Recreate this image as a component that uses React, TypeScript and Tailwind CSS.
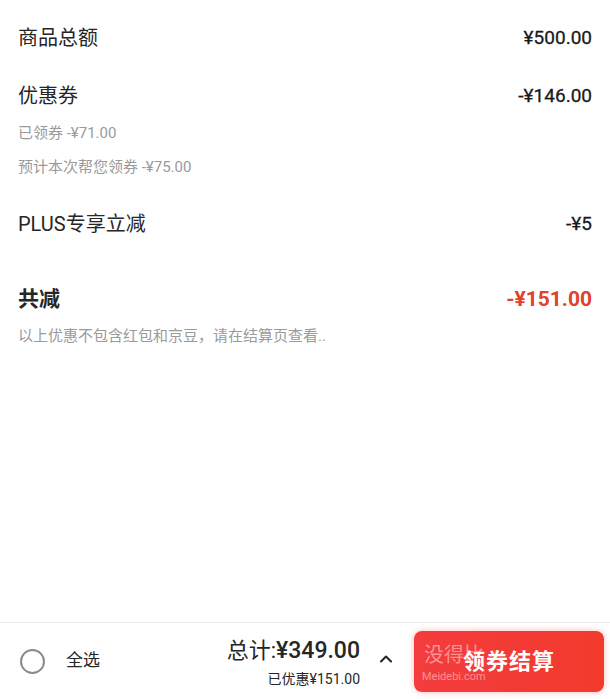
import { ChevronUp } from "lucide-react";

const font = { fontFamily: '"Roboto", "Noto Sans CJK SC", sans-serif' };

export default function App() {
  return (
    <div
      className="w-[610px] h-[699px] bg-white flex flex-col text-[#262626]"
      style={font}
    >
      {/* Detail list */}
      <div className="flex-1 px-[18px] pt-[24px]">
        <div className="flex justify-between items-center h-[28px] text-[20px]">
          <span>商品总额</span>
          <span className="text-[19px] text-[#1a1a1a] [-webkit-text-stroke:0.3px_#1a1a1a]">¥500.00</span>
        </div>

        <div className="mt-[30px] flex justify-between items-center h-[28px] text-[20px]">
          <span>优惠券</span>
          <span className="text-[19px] text-[#1a1a1a] [-webkit-text-stroke:0.3px_#1a1a1a]">-¥146.00</span>
        </div>
        <div className="mt-[13px] text-[15px] text-[#9a9a9a] leading-[20px]">已领券 -¥71.00</div>
        <div className="mt-[14px] text-[15px] text-[#9a9a9a] leading-[20px]">预计本次帮您领券 -¥75.00</div>

        <div className="mt-[33px] flex justify-between items-center h-[28px] text-[20px]">
          <span>PLUS专享立减</span>
          <span className="text-[19px] text-[#1a1a1a] [-webkit-text-stroke:0.3px_#1a1a1a]">-¥5</span>
        </div>

        <div className="mt-[47px] flex justify-between items-center h-[30px]">
          <span className="text-[21px] font-bold">共减</span>
          <span className="text-[21px] font-bold text-[#e2412b]">-¥151.00</span>
        </div>
        <div className="mt-[11px] text-[15px] text-[#9a9a9a] leading-[20px]">
          以上优惠不包含红包和京豆，请在结算页查看..
        </div>
      </div>

      {/* Bottom bar */}
      <div className="h-[77px] border-t border-[#ececec] flex items-center pl-[20px] pr-[6px]">
        <div className="w-[25px] h-[25px] rounded-full border-2 border-[#8a8a8a]" />
        <span className="ml-[21px] text-[17px]">全选</span>
        <div className="flex-1" />
        <div className="flex flex-col items-end mr-[16px] pt-[2px]">
          <div className="leading-[30px]">
            <span className="text-[22px]">总计:</span>
            <span className="text-[23px] font-medium">¥349.00</span>
          </div>
          <div className="text-[14px] leading-[18px] mt-[2px]">已优惠¥151.00</div>
        </div>
        <ChevronUp className="w-[20px] h-[20px] mr-[18px] -mt-[4px]" strokeWidth={2.5} />
        <div className="relative w-[190px] h-[61px] rounded-[8px] bg-gradient-to-r from-[#f43c3e] to-[#f23a2c] flex items-center justify-center shadow-[0_0_6px_rgba(244,60,62,0.35)]">
          <span className="absolute left-[10px] top-[14px] text-[20px] text-white/45 leading-none">没得比</span>
          <span className="absolute left-[8px] top-[40px] text-[11px] text-white/45 leading-none">Meidebi.com</span>
          <span className="relative text-white text-[22px] font-bold tracking-[1px]">领券结算</span>
        </div>
      </div>
    </div>
  );
}
